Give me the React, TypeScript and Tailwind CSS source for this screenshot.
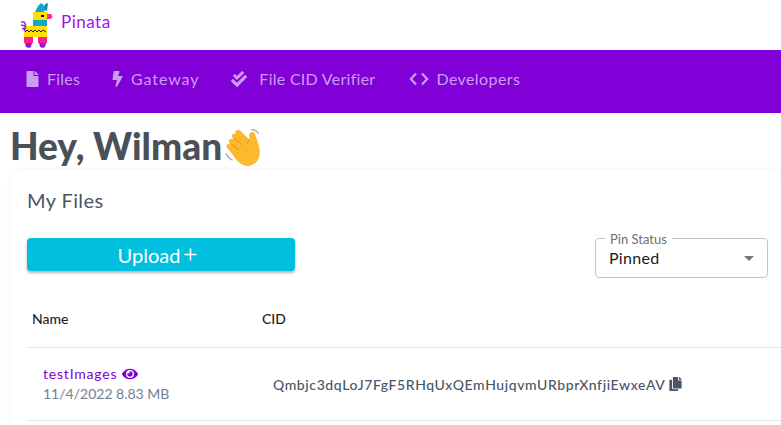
import React from "react";
import { FaFile, FaBolt, FaCheckDouble, FaEye, FaCopy } from "react-icons/fa";

const font = "font-['Lato','Noto_Sans',sans-serif]";

function Llama() {
  const r = (x: number, y: number, w: number, h: number, f: string) => <rect key={`${x}-${y}-${f}`} x={x} y={y} width={w} height={h} fill={f} />;
  return (
    <svg width="36" height="48" viewBox="0 0 36 48" className="shrink-0">
      <path d="M17 11 L20 5 L23 2 L27 5 L26 12 Z" fill="#10a8d0" />
      <path d="M26 9 L27 3 L30 2 L29 10 Z" fill="#0c90b8" />
      {r(15, 11, 15, 8, "#ffe000")}
      <path d="M29 13 L33 13 L34.5 15.5 L33 18 L29 18 Z" fill="#ff2a90" />
      {r(23, 14, 3, 2, "#111111")}
      {r(15, 19, 14, 6, "#10a8d0")}
      {r(6, 25, 23, 11, "#ffe000")}
      <path d="M7 31 L9 29 L11 31 L13 29 L15 31 L17 29 L19 31 L21 29 L23 31 L25 29 L28 31" fill="none" stroke="#222" strokeWidth="1" />
      <path d="M6 30 C8 27 8 23 6 21 L3 21 M7 25 L3 24 M7 27 L4 28" fill="none" stroke="#9a30d0" strokeWidth="1.6" />
      {r(6, 36, 9, 6, "#ff1f8e")}
      {r(20, 36, 9, 6, "#ff1f8e")}
      <path d="M7 42 L14 42 L13 46 L11 47 L8 46 Z" fill="#8a20c8" />
      <path d="M21 42 L28 42 L27 46 L25 47 L22 46 Z" fill="#8a20c8" />
    </svg>
  );
}

function Wave() {
  return (
    <svg width="40" height="40" viewBox="0 0 38 38" className="ml-[2px] mt-1 shrink-0">
      <path d="M5 14 C3 11 7 9 9 11 L8 9 C6 6 10 4 12 6 L11 5 C10 2 14 1 16 3 L24 11 L24 6 C25 3 29 3 29.5 6 C31 11 34 16 34 23 C34 32 27 37 21 36 C15 35 11 30 8 25 L3 19 C1 16 4 14 6 16 Z" fill="#fdb92e" />
      <path d="M24 11 L22 15 M10 10 L17 16 M7 15 L14 21" stroke="#e59a18" strokeWidth="1" fill="none" />
      <path d="M26 1.5 C29 1.5 31.5 3 33 5.5 M2 24 C3 27 5 29 8 30.5" stroke="#9aa5ad" strokeWidth="1.2" fill="none" />
    </svg>
  );
}

export default function App() {
  return (
    <div className={`${font} h-[425px] w-full overflow-hidden bg-white`}>
      <header className="flex h-[50px] items-center pl-[18px]">
        <Llama />
        <span className="ml-[7px] mb-[6px] text-[17px] tracking-[0.5px] text-[#a010f0]">Pinata</span>
      </header>
      <nav className="flex h-[63px] items-center bg-[#8000d7] pb-[6px] pl-[26px]">
        <div className="flex items-center gap-2">
          <FaFile className="h-[16px] w-[13px] text-[#cb9df2]" />
          <span className="text-[16px] tracking-[0.2px] text-[#cb9df2] leading-none">Files</span>
        </div>
        <div className="ml-8 flex items-center gap-2">
          <FaBolt className="h-[16px] w-[11px] text-[#cb9df2]" />
          <span className="text-[16px] tracking-[0.9px] text-[#cb9df2] leading-none">Gateway</span>
        </div>
        <div className="ml-8 flex items-center gap-3">
          <FaCheckDouble className="h-[16px] w-[16px] text-[#cb9df2]" />
          <span className="text-[16px] tracking-[0.27px] text-[#cb9df2] leading-none">File CID Verifier</span>
        </div>
        <div className="ml-[34px] flex items-center gap-[7px]">
          <svg width="20" height="14" viewBox="0 0 20 14" fill="none" stroke="#cb9df2" strokeWidth="2.2">
            <path d="M7 1.5 L1.8 7 L7 12.5 M13 1.5 L18.2 7 L13 12.5" />
          </svg>
          <span className="text-[16px] tracking-[0.4px] text-[#cb9df2] leading-none">Developers</span>
        </div>
      </nav>
      <div className="flex h-[57px] items-center pl-[10px] pt-2">
        <h1 className="text-[37px] font-black leading-none text-[#4a5058]">Hey, Wilman</h1>
        <Wave />
      </div>
      <main className="ml-[11px] h-[300px] rounded-xl bg-white pl-4 shadow-[0_0_6px_rgba(0,0,0,0.06)]">
        <h2 className="pt-[19px] text-[20px] leading-[22px] tracking-[0.4px] text-[#4a5568]">My Files</h2>
        <div className="mt-[27px] flex items-start justify-between pr-[13px]">
          <button className="flex h-[33px] w-[268px] items-center justify-center gap-1 rounded bg-[#00bfdf] pr-[7px] text-[20px] text-white shadow-[0_2px_3px_rgba(0,0,0,0.3)]">
            Upload
            <svg width="13" height="13" viewBox="0 0 13 13" stroke="#fff" strokeWidth="1.5"><path d="M6.5 0.5 V12.5 M0.5 6.5 H12.5" /></svg>
          </button>
          <div className="relative flex h-10 w-[173px] items-center justify-between rounded border border-[#c4c4c4] pl-[13px] pr-[13px]">
            <span className="absolute -top-[7px] left-[9px] bg-white px-[5px] text-[13px] leading-[14px] text-[#6f6f6f]">Pin Status</span>
            <span className="text-[16px] tracking-[0.3px] text-[#1a1a1a]">Pinned</span>
            <span className="h-0 w-0 border-x-[5px] border-t-[5px] border-x-transparent border-t-[#757575]" />
          </div>
        </div>
        <div className="flex h-[70px] items-start border-b border-[#e2e2e2] pt-8 text-[14px] font-medium leading-[18px] text-[#1f1f1f]">
          <span className="w-[235px] pl-[5px]">Name</span>
          <span>CID</span>
        </div>
        <div className="flex h-[73px] items-center border-b border-[#e2e2e2] text-[14px]">
          <div className="w-[246px] pl-4">
            <div className="flex items-center gap-[5px] leading-5 tracking-[0.8px] text-[#8000d7]">
              testImages <FaEye className="h-4 w-4" />
            </div>
            <div className="leading-5 text-[#718096]">11/4/2022 8.83 MB</div>
          </div>
          <div className="flex items-center gap-1 font-medium tracking-[0.6px] text-[#4a5568]">
            Qmbjc3dqLoJ7FgF5RHqUxQEmHujqvmURbprXnfjiEwxeAV
            <FaCopy className="h-[14px] w-[13px]" />
          </div>
        </div>
      </main>
    </div>
  );
}
